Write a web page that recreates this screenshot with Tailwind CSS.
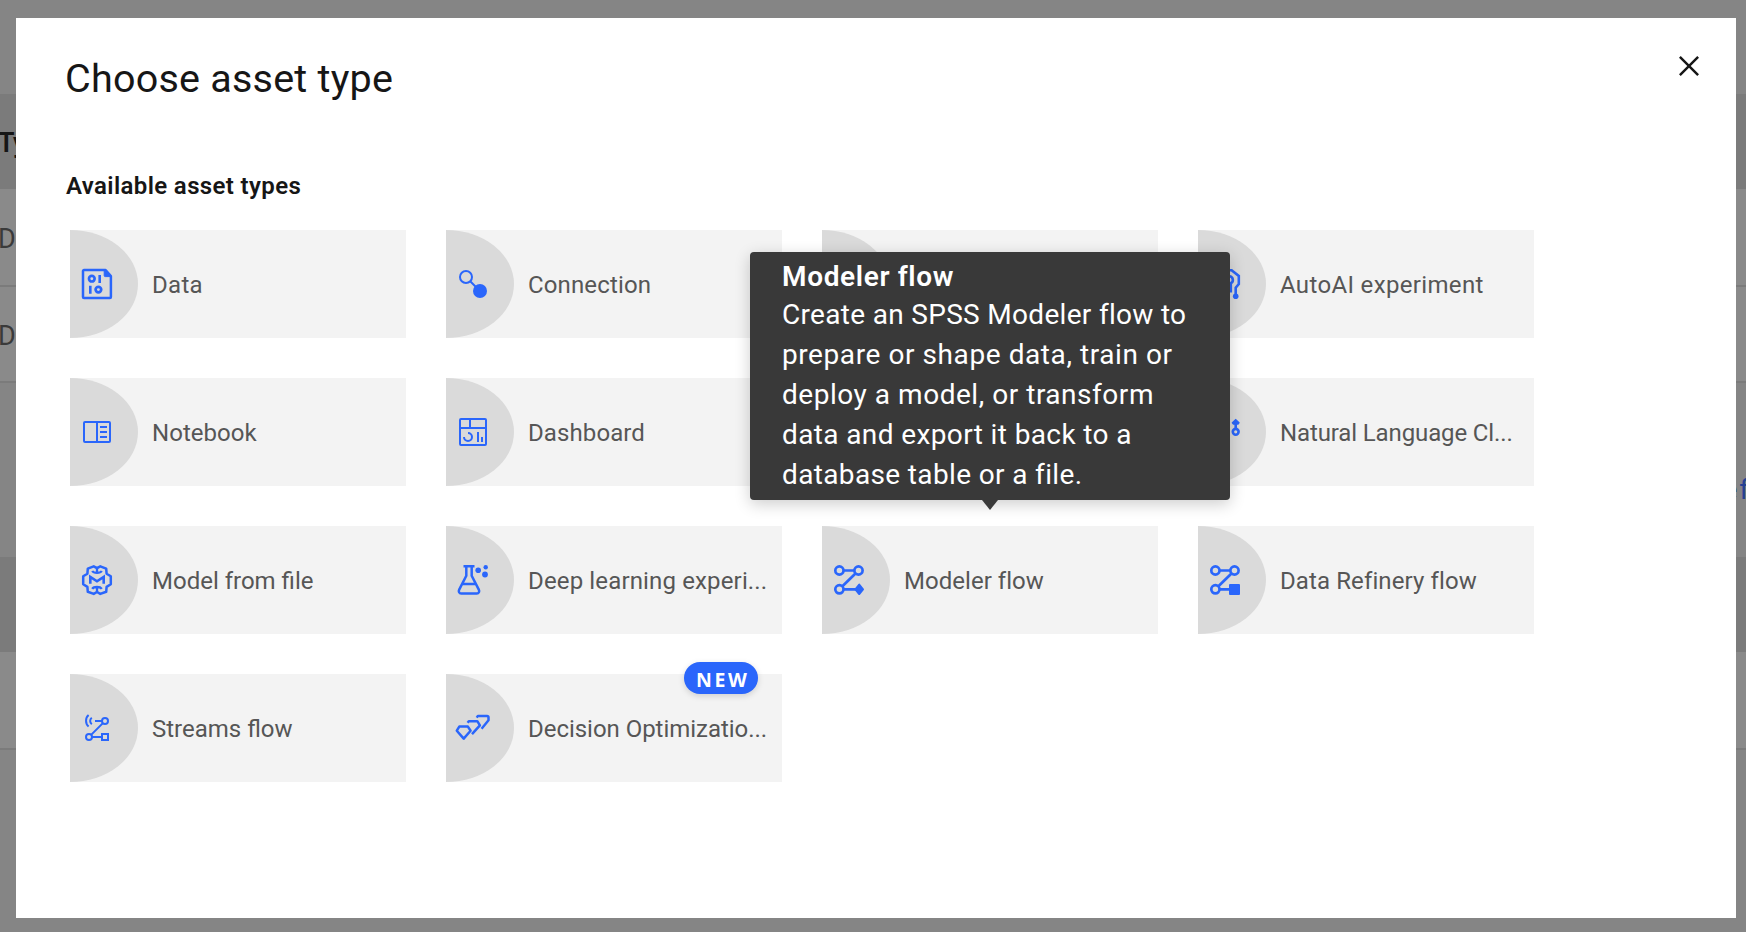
<!DOCTYPE html>
<html lang="en">
<head>
<meta charset="utf-8">
<title>Choose asset type</title>
<script src="https://cdn.jsdelivr.net/npm/@tailwindcss/browser@4"></script>
</head>
<body class="relative h-[932px] w-[1746px] overflow-hidden bg-[#858585] font-['Roboto','Noto_Sans',sans-serif]">

<!-- Dimmed page behind the dialog -->
<div class="flex h-full flex-col text-[27px] text-[#3a3a3a]" aria-hidden="true">
  <div class="h-[94px]"></div>
  <div class="flex h-[95px] items-center bg-[#7b7b7b] pt-[4px] font-semibold text-[#161616]"><span class="-ml-[2px] tracking-[-0.5px]">Ty</span></div>
  <div class="flex h-[98px] items-center border-b-2 border-[#7b7b7b] bg-[#8a8a8a] pt-[5px]"><span class="-ml-[2px]">D</span></div>
  <div class="flex h-[96px] items-center border-b-2 border-[#7b7b7b] bg-[#8a8a8a] pt-[4px]"><span class="-ml-[2px]">D</span></div>
  <div class="flex h-[174px] justify-end pt-[91px] leading-[32px]"><span class="-mr-[5px] text-[28px] tracking-[2px] text-[#254192]">ef</span></div>
  <div class="h-[95px] bg-[#7b7b7b]"></div>
  <div class="h-[98px] border-b-2 border-[#7b7b7b] bg-[#8a8a8a]"></div>
</div>

<!-- Dialog -->
<main class="absolute top-[18px] left-[16px] flex h-[900px] w-[1720px] flex-col bg-white pt-9 text-[#161616]">
  <header class="flex justify-between pr-[27px] pl-[49px]">
    <h1 class="pt-px text-[39.5px] leading-[47px] tracking-[0.227px]">Choose asset type</h1>
    <button class="-mt-2 h-10 w-10" aria-label="Close">
      <svg class="h-10 w-10" viewBox="0 0 32 32" fill="#161616"><path d="M24 9.4 22.6 8 16 14.6 9.4 8 8 9.4l6.6 6.6L8 22.6 9.4 24l6.6-6.6 6.6 6.6 1.4-1.4-6.6-6.6L24 9.4z"/></svg>
    </button>
  </header>
  <h2 class="mt-[68px] pl-[50px] text-2xl leading-8 font-semibold tracking-[0.372px]">Available asset types</h2>

  <section class="mt-7 ml-[54px] grid w-max grid-cols-[repeat(4,336px)] gap-10 text-2xl whitespace-nowrap text-[#565656]">
    <div class="flex h-[108px] items-center bg-[#f3f3f3]">
      <div class="flex h-full w-[68px] items-center bg-[#dadada] pl-[11px] [border-radius:0_100%_100%_0/0_50%_50%_0]">
        <svg class="h-8 w-8 overflow-visible" viewBox="0 0 32 32" fill="none" stroke="#2a66fb" stroke-width="2.5"><path d="M3 2.100h21.600L29.900 8v21a1 1 0 0 1-1 1H3a1 1 0 0 1-1-1V3.100a1 1 0 0 1 1-1z" stroke-linejoin="round"/><path d="M23.200 2v5.600a1 1 0 0 0 1 1H30z" fill="#2a66fb" stroke-width="1"/><circle cx="10.800" cy="10.700" r="2.800" stroke-width="2.700"/><circle cx="17.400" cy="21.600" r="2.800" stroke-width="2.700"/><path d="M18.700 7v8M9.300 17.800v8" stroke-width="2.600"/></svg>
      </div>
      <span class="ml-[14px] pt-[2px] tracking-[0.315px]">Data</span>
    </div>
    <div class="flex h-[108px] items-center bg-[#f3f3f3]">
      <div class="flex h-full w-[68px] items-center bg-[#dadada] pl-[11px] [border-radius:0_100%_100%_0/0_50%_50%_0]">
        <svg class="h-8 w-8 overflow-visible" viewBox="0 0 32 32" fill="none" stroke="#2a66fb" stroke-width="2"><circle cx="9" cy="9" r="6"/><path d="m13.200 13.200 6 6"/><circle cx="23" cy="23" r="7" fill="#2a66fb" stroke="none"/></svg>
      </div>
      <span class="ml-[14px] pt-[2px] tracking-[0.136px]">Connection</span>
    </div>
    <div class="flex h-[108px] items-center bg-[#f3f3f3]">
      <div class="h-full w-[68px] bg-[#dadada] [border-radius:0_100%_100%_0/0_50%_50%_0]"></div>
    </div>
    <div class="flex h-[108px] items-center bg-[#f3f3f3]">
      <div class="flex h-full w-[68px] items-center bg-[#dadada] pl-[11px] [border-radius:0_100%_100%_0/0_50%_50%_0]">
        <svg class="h-8 w-8 overflow-visible" viewBox="0 0 32 32" fill="none" stroke="#2a66fb" stroke-width="2.600"><path d="M20 2.300h2.600L29.800 8v8l-3.100 3.700v7"/><circle cx="26.700" cy="28.200" r="2.800" fill="#2a66fb" stroke="none"/><path d="M20.400 8.200a3.700 3.700 0 0 1 1.400 7v9.300"/></svg>
      </div>
      <span class="ml-[14px] pt-[2px] tracking-[0.340px]">AutoAI experiment</span>
    </div>

    <div class="flex h-[108px] items-center bg-[#f3f3f3]">
      <div class="flex h-full w-[68px] items-center bg-[#dadada] pl-[11px] [border-radius:0_100%_100%_0/0_50%_50%_0]">
        <svg class="h-8 w-8" viewBox="0 0 32 32" fill="#2a66fb"><path d="M19 10h7v2h-7zM19 15h7v2h-7zM19 20h7v2h-7z"/><path d="M28 5H4a2 2 0 0 0-2 2v18a2 2 0 0 0 2 2h24a2 2 0 0 0 2-2V7a2 2 0 0 0-2-2zM4 7h11v18H4zm13 18V7h11v18z"/></svg>
      </div>
      <span class="ml-[14px] pt-[2px] tracking-[0.050px]">Notebook</span>
    </div>
    <div class="flex h-[108px] items-center bg-[#f3f3f3]">
      <div class="flex h-full w-[68px] items-center bg-[#dadada] pl-[11px] [border-radius:0_100%_100%_0/0_50%_50%_0]">
        <svg class="h-8 w-8" viewBox="0 0 32 32" fill="#2a66fb"><path d="M24 21h2v5h-2zM20 16h2v10h-2zM11 26a5 5 0 0 1-5-5h2a3 3 0 1 0 3-3v-2a5 5 0 0 1 0 10z"/><path d="M28 2H4a2 2 0 0 0-2 2v24a2 2 0 0 0 2 2h24a2 2 0 0 0 2-2V4a2 2 0 0 0-2-2zm0 9H14V4h14zM12 4v7H4V4zm16 24H4V13h24z"/></svg>
      </div>
      <span class="ml-[14px] pt-[2px] tracking-[0.100px]">Dashboard</span>
    </div>
    <div class="h-[108px] bg-[#f3f3f3]"></div>
    <div class="flex h-[108px] items-center bg-[#f3f3f3]">
      <div class="flex h-full w-[68px] items-center bg-[#dadada] pl-[11px] [border-radius:0_100%_100%_0/0_50%_50%_0]">
        <svg class="h-8 w-8" viewBox="0 0 32 32" fill="none" stroke="#2a66fb" stroke-width="2.600"><path d="m26.700 3.700 3.200 3.100-1 1.200h-4.400l-1-1.200z" fill="#2a66fb" stroke-width="1.600" stroke-linejoin="round"/><path d="M26.700 6v7"/><circle cx="26.700" cy="15.800" r="2.900"/></svg>
      </div>
      <span class="ml-[14px] pt-[2px] tracking-[-0.121px]">Natural Language Cl...</span>
    </div>

    <div class="flex h-[108px] items-center bg-[#f3f3f3]">
      <div class="flex h-full w-[68px] items-center bg-[#dadada] pl-[11px] [border-radius:0_100%_100%_0/0_50%_50%_0]">
        <svg class="h-8 w-8 overflow-visible" viewBox="0 0 32 32" fill="none" stroke="#2a66fb" stroke-width="2.500" stroke-linejoin="round"><path d="M16 4.200 19.300 2.300 25.200 4.600l.4 5.100L29.800 12.300v8l-4.200 2.600-.4 4.900-5.900 2.100L16 28l-3.300 1.900-5.900-2.100-.4-4.900L2.200 20.300v-8l4.200-2.600.4-5.100 5.900-2.300z"/><path d="M16 3.500v5.200M16 28.500v-5.400M11.200 7c1 1.600 2.300 1.900 4.800 1.900S19.800 8.600 20.800 7M11.200 24.900c1-1.500 2.300-1.900 4.800-1.900s3.800.4 4.800 1.900" stroke-width="2.300"/><path d="M9.300 19.800v-6.800l6.700 4.300 6.700-4.300v6.800" stroke-width="2.600" stroke-linejoin="miter"/></svg>
      </div>
      <span class="ml-[14px] pt-[2px] tracking-[0]">Model from file</span>
    </div>
    <div class="flex h-[108px] items-center bg-[#f3f3f3]">
      <div class="flex h-full w-[68px] items-center bg-[#dadada] pl-[11px] [border-radius:0_100%_100%_0/0_50%_50%_0]">
        <svg class="h-8 w-8 overflow-visible" viewBox="0 0 32 32" fill="none" stroke="#2a66fb" stroke-width="2.500"><path d="M6.500 2.200h11M9.300 2.200v9.600L2.200 25.600c-1 2 0 3.900 2 3.900h15.600c2 0 3-1.900 2-3.900L14.700 11.800V2.200M5.500 20h13"/><g fill="#2a66fb" stroke="none"><circle cx="21.200" cy="6.300" r="2.800"/><circle cx="28.700" cy="3.300" r="2.200"/><circle cx="28" cy="10.500" r="2.900"/></g></svg>
      </div>
      <span class="ml-[14px] pt-[2px] tracking-[0.145px]">Deep learning experi...</span>
    </div>
    <div class="flex h-[108px] items-center bg-[#f3f3f3]">
      <div class="flex h-full w-[68px] items-center bg-[#dadada] pl-[11px] [border-radius:0_100%_100%_0/0_50%_50%_0]">
        <svg class="h-8 w-8 overflow-visible" viewBox="0 0 32 32" fill="none" stroke="#2a66fb" stroke-width="2.700"><circle cx="6.400" cy="6.500" r="4.100"/><circle cx="25.500" cy="6.500" r="4.100"/><circle cx="6.400" cy="25.300" r="4.100"/><path d="M10.600 6.500h10.700M22.500 9.500 9.400 22.300M10.600 25.300H24"/><path d="m26.200 20.600 3.800 4.700-3.800 4.700-3.800-4.700z" fill="#2a66fb" stroke-width="2" stroke-linejoin="round"/></svg>
      </div>
      <span class="ml-[14px] pt-[2px] tracking-[0.039px]">Modeler flow</span>
    </div>
    <div class="flex h-[108px] items-center bg-[#f3f3f3]">
      <div class="flex h-full w-[68px] items-center bg-[#dadada] pl-[11px] [border-radius:0_100%_100%_0/0_50%_50%_0]">
        <svg class="h-8 w-8 overflow-visible" viewBox="0 0 32 32" fill="none" stroke="#2a66fb" stroke-width="2.700"><circle cx="6.400" cy="6.500" r="4.100"/><circle cx="25.500" cy="6.500" r="4.100"/><circle cx="6.400" cy="25.300" r="4.100"/><path d="M10.600 6.500h10.700M22.500 9.500 9.400 22.300M10.600 25.300H22"/><rect x="20" y="20" width="11" height="11" rx="1" fill="#2a66fb" stroke="none"/></svg>
      </div>
      <span class="ml-[14px] pt-[2px] tracking-[0.110px]">Data Refinery flow</span>
    </div>

    <div class="flex h-[108px] items-center bg-[#f3f3f3]">
      <div class="flex h-full w-[68px] items-center bg-[#dadada] pl-[11px] [border-radius:0_100%_100%_0/0_50%_50%_0]">
        <svg class="h-8 w-8" viewBox="0 0 32 32" fill="none" stroke="#2a66fb" stroke-width="2"><path d="M7.600 3C4.200 5.800 4.200 11.700 7.600 14.500M10.800 5.800c-2.200 1.700-2.200 4.700 0 6.400M14 9h7"/><circle cx="24" cy="9" r="3"/><circle cx="8" cy="25" r="3"/><path d="M21.900 11.100 10.100 22.900M11 25h9"/><path d="M21 22h6v6h-6z"/></svg>
      </div>
      <span class="ml-[14px] pt-[2px] tracking-[0]">Streams flow</span>
    </div>
    <div class="relative flex h-[108px] items-center bg-[#f3f3f3]">
      <div class="flex h-full w-[68px] items-center bg-[#dadada] pl-[11px] [border-radius:0_100%_100%_0/0_50%_50%_0]">
        <svg class="h-8 w-8 overflow-visible" viewBox="0 0 32 32" fill="none" stroke="#2a66fb" stroke-width="2.500" stroke-linejoin="round"><path d="M2.300 14.600h8.600l2.700 4.100-6.900 7.900-6.900-7.900z"/><path d="M10.600 10.800 11.800 9.200h8.500l2.600 4.100-7.900 8.900M19.700 5.600 20.900 3.900h9.100c1 0 1.500.6 1.500 1.500v2.900l-6.900 8.400"/></svg>
      </div>
      <span class="ml-[14px] pt-[2px] tracking-[-0.034px]">Decision Optimizatio...</span>
      <span class="absolute -top-3 left-[238px] flex h-8 w-[74px] items-center rounded-full bg-[#2a66fb] pt-[4px] pl-[12px] font-['Noto_Sans',sans-serif] text-[19.5px] font-bold tracking-[2.600px] text-white shadow-[0_2px_6px_rgba(0,0,0,0.15)]">NEW</span>
    </div>
  </section>
</main>

<!-- Tooltip -->
<div role="tooltip" class="absolute top-[252px] left-[750px] h-[248px] w-[480px] rounded bg-[#393939] pt-2 pl-8 text-[28px] leading-10 whitespace-nowrap text-white shadow-[0_4px_16px_rgba(0,0,0,0.2)]">
  <p class="leading-[33px] font-semibold tracking-[0.650px]">Modeler flow</p>
  <p class="mt-[2px] tracking-[0.310px]">Create an SPSS Modeler flow to</p>
  <p class="tracking-[0.580px]">prepare or shape data, train or</p>
  <p class="tracking-[0.530px]">deploy a model, or transform</p>
  <p class="tracking-[0.380px]">data and export it back to a</p>
  <p class="tracking-[0.360px]">database table or a file.</p>
  <div class="absolute top-full left-[232px] h-[10px] w-4 bg-[#393939] [clip-path:polygon(0_0,100%_0,50%_100%)]"></div>
</div>
</body>
</html>
